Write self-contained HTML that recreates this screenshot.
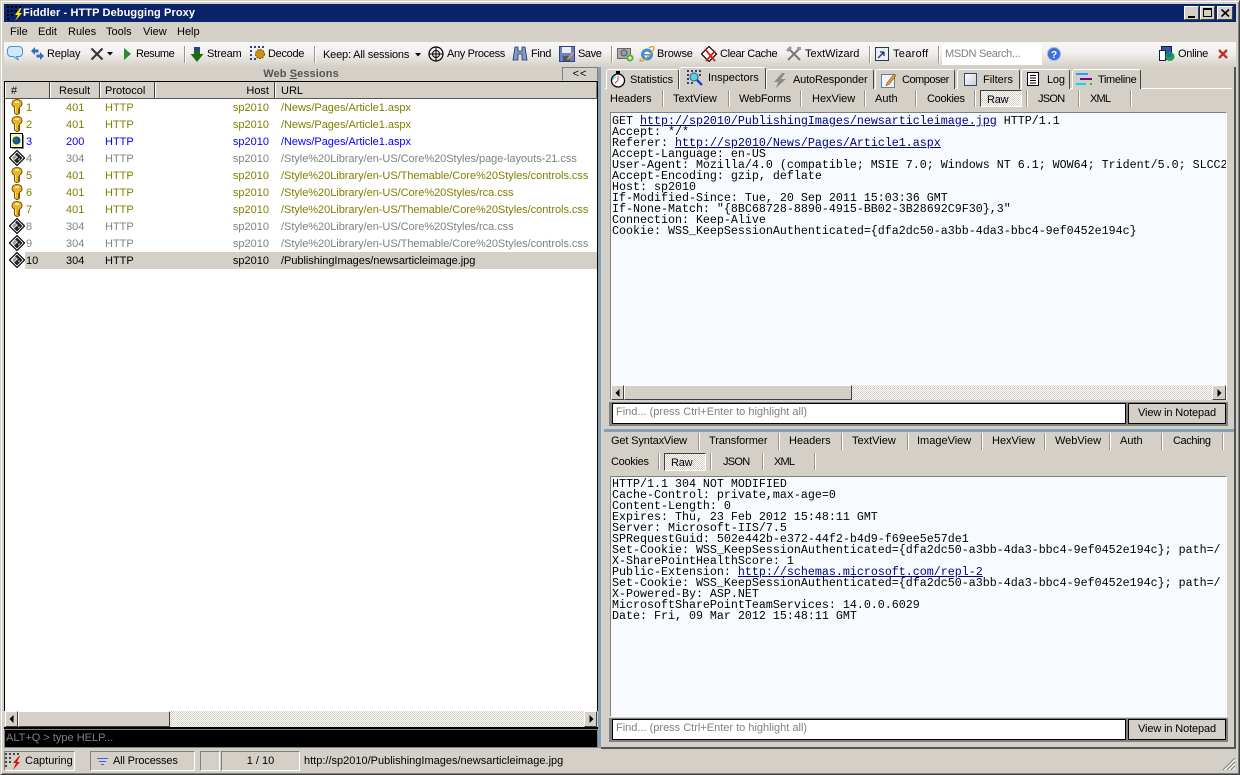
<!DOCTYPE html>
<html><head><meta charset="utf-8"><title>Fiddler - HTTP Debugging Proxy</title>
<style>
html,body{margin:0;padding:0}
body{width:1240px;height:775px;overflow:hidden;position:relative;background:#d4d0c8;font:11px/13px "Liberation Sans",sans-serif;color:#000}
.a,.t,.b,svg{position:absolute}
.t{white-space:pre;line-height:13px}
.r{text-align:right}
.ol{color:#808000}.bl{color:#0000ff}.gr{color:#808080}
.u{letter-spacing:-.035px}
.pre{position:absolute;font:11.67px/11px "Liberation Mono",monospace;white-space:pre;color:#000;margin:0}
.pre a{color:#000080;text-decoration:underline}
.btn{position:absolute;background:#d4d0c8;border:1px solid;border-color:#fff #404040 #404040 #fff;box-sizing:border-box}
.hd{position:absolute;top:82px;height:16px;background:#d4d0c8;border-left:1px solid #fff;border-right:1px solid #808080;box-sizing:border-box}
.tab{position:absolute;background:#d4d0c8;border:1px solid #fff;border-bottom:0;border-right:1px solid #444;border-radius:3px 3px 0 0;box-sizing:border-box}
.s{position:absolute;width:2px;height:17px;background:linear-gradient(90deg,#9a968e 50%,#fff 50%)}
.chk{background:repeating-conic-gradient(#fff 0 25%,#d4d0c8 0 50%) 0 0/2px 2px}
</style></head><body>
<svg width="0" height="0" style="position:absolute"><defs>
<symbol id="key" viewBox="0 0 12 16"><path d="M6 .5C2.800.5 1 2.200 1 4.500 1 6.300 2 7.500 3.500 8.200V14l2.500 1.800L8.500 14.500V13.500H7.500V12.500H8.500V11H7.500V10H8.500V8.200C10 7.500 11 6.300 11 4.500 11 2.200 9.200.5 6 .5z" fill="#e9b52c" stroke="#7a5200" stroke-width="1"/><path d="M4 2.500h4v1.500H4z" fill="#fff3b0"/><path d="M4.500 8v6" stroke="#ffe27a" stroke-width="1"/></symbol>
<symbol id="dia" viewBox="0 0 16 16"><path d="M8 .5L15.500 8 8 15.500 .5 8z" fill="#fff" stroke="#000" stroke-width="1.200"/><path d="M8 2.500L13.500 8 8 13.500 5 10.500 9 7 6 4.500z" fill="#222"/><path d="M3 8l3-3 2 1.500-3 3.500z" fill="#999"/><path d="M9 9l2-1-1 3z" fill="#ccc"/></symbol>
</defs></svg>

<!-- window frame -->
<div class="a" style="left:0;top:0;width:1240px;height:775px;box-sizing:border-box;border:1px solid;border-color:#d4d0c8 #404040 #404040 #d4d0c8;box-shadow:inset 1px 1px 0 #fff,inset -1px -1px 0 #808080"></div>
<!-- title -->
<div class="a" style="left:4px;top:4px;width:1232px;height:18px;background:#0a246a"></div>
<svg style="left:6px;top:5px" width="18" height="16"><g fill="#000"><rect x="1" y="1" width="2" height="2"/><rect x="5" y="1" width="2" height="2"/><rect x="9" y="1" width="2" height="2"/><rect x="13" y="1" width="2" height="2"/><rect x="1" y="5" width="2" height="2"/><rect x="5" y="5" width="2" height="2"/><rect x="9" y="5" width="2" height="2"/><rect x="1" y="9" width="2" height="2"/><rect x="5" y="9" width="2" height="2"/><rect x="1" y="13" width="2" height="2"/></g><path d="M14 3L9 10h3L9 16l7-8h-3l2.500-5z" fill="#ffe800"/></svg>
<div class="t" style="left:23px;top:7px;color:#fff;font-weight:bold;font-size:11px;letter-spacing:.1px">Fiddler - HTTP Debugging Proxy</div>
<div class="btn" style="left:1184px;top:6px;width:15px;height:14px"><div class="a" style="left:3px;top:9px;width:7px;height:2px;background:#000"></div></div>
<div class="btn" style="left:1200px;top:6px;width:15px;height:14px"><div class="a" style="left:2px;top:1px;width:9px;height:9px;border:1px solid #000;border-top-width:2px;box-sizing:border-box"></div></div>
<div class="btn" style="left:1217px;top:6px;width:16px;height:14px"><svg style="left:3px;top:2px" width="9" height="8"><path d="M.5.5l7.500 7M8 .5L.5 7.500" stroke="#000" stroke-width="1.600"/></svg></div>
<!-- menu -->
<div class="t" style="left:10px;top:26px">File</div>
<div class="t" style="left:38px;top:26px">Edit</div>
<div class="t" style="left:68px;top:26px">Rules</div>
<div class="t" style="left:106px;top:26px">Tools</div>
<div class="t" style="left:143px;top:26px">View</div>
<div class="t" style="left:177px;top:26px">Help</div>
<!-- toolbar -->
<div class="a" style="left:4px;top:42px;width:1232px;height:25px;background:linear-gradient(#f8f7f5,#f3f1ef 40%,#d4d0c8)"></div>
<svg style="left:7px;top:45px" width="17" height="17"><path d="M4 1.500h8c2 0 3.500 1.500 3.500 3.500v3c0 2-1.500 3.500-3.500 3.500H9.500l2 3.500-5-3.500H4C2 11.500.5 10 .5 8V5C.5 3 2 1.500 4 1.500z" fill="#cfe8fb" stroke="#4a8fd0"/></svg>
<svg style="left:30px;top:46px" width="15" height="15"><path d="M1 5l4-4v2.500h3.500v3H5V9zM14 10l-4 4v-2.500H6.500v-3H10V6z" fill="#2f6fc0"/></svg>
<div class="t" style="left:47px;top:48px;letter-spacing:-.15px">Replay</div>
<svg style="left:90px;top:47px" width="14" height="14"><path d="M1.500 1.500l11 11M12.500 1.500l-11 11" stroke="#333" stroke-width="2"/></svg>
<svg style="left:107px;top:52px" width="6" height="4"><path d="M0 0h6L3 3.500z" fill="#000"/></svg>
<svg style="left:123px;top:48px" width="9" height="12"><path d="M1 0l7 6-7 6z" fill="#2f8a2f"/></svg>
<div class="t" style="left:136px;top:48px;letter-spacing:-.45px">Resume</div>
<div class="s" style="left:184px;top:46px"></div>
<svg style="left:190px;top:46px" width="14" height="17"><path d="M4 1h6v7h3.500L7 16 .5 8H4z" fill="#1f6b15"/><rect x="4" y="1" width="6" height="3" fill="#2040b0"/></svg>
<div class="t" style="left:207px;top:48px;letter-spacing:-.15px">Stream</div>
<svg style="left:250px;top:45px" width="16" height="16"><g fill="#304090"><rect x="0" y="1" width="2" height="2"/><rect x="4" y="1" width="2" height="2"/><rect x="8" y="1" width="2" height="2"/><rect x="12" y="1" width="2" height="2"/><rect x="0" y="5" width="2" height="2"/><rect x="0" y="9" width="2" height="2"/><rect x="0" y="13" width="2" height="2"/><rect x="4" y="13" width="2" height="2"/></g><circle cx="10" cy="9" r="4.500" fill="#c89010" stroke="#705000" stroke-dasharray="2 1"/></svg>
<div class="t" style="left:268px;top:48px;letter-spacing:-.3px">Decode</div>
<div class="s" style="left:314px;top:46px"></div>
<div class="t" style="left:323px;top:49px;letter-spacing:-.17px">Keep: All sessions</div>
<svg style="left:415px;top:53px" width="6" height="4"><path d="M0 0h6L3 3.500z" fill="#000"/></svg>
<svg style="left:428px;top:46px" width="16" height="16"><circle cx="8" cy="8" r="7" fill="none" stroke="#000" stroke-width="1.200"/><path d="M8 1v14M1 8h14" fill="none" stroke="#000"/><circle cx="8" cy="8" r="3.500" fill="none" stroke="#000"/></svg>
<div class="t" style="left:447px;top:48px;letter-spacing:-.35px">Any Process</div>
<svg style="left:512px;top:46px" width="16" height="15"><path d="M3 1h3v4h4V1h3l2 13h-5V8H6v6H1z" fill="#7f9ccc" stroke="#203060" stroke-width=".8"/></svg>
<div class="t" style="left:531px;top:48px;letter-spacing:-.35px">Find</div>
<svg style="left:559px;top:46px" width="16" height="16"><rect x=".5" y=".5" width="15" height="15" fill="#6c7fc0" stroke="#304080"/><rect x="3" y="1" width="9" height="6" fill="#eee"/><rect x="4" y="10" width="7" height="5" fill="#556"/><path d="M8 13l6-7 1 1-6 7z" fill="#e0b040"/></svg>
<div class="t" style="left:578px;top:48px;letter-spacing:-.4px">Save</div>
<div class="s" style="left:611px;top:46px"></div>
<svg style="left:617px;top:46px" width="17" height="16"><rect x=".5" y="2.500" width="13" height="10" fill="#b0aca4" stroke="#666"/><circle cx="7" cy="7" r="3" fill="#8aa0c0" stroke="#555"/><circle cx="13" cy="12" r="3.500" fill="#50b030"/><path d="M13 10v4M11 12h4" stroke="#fff"/></svg>
<svg style="left:639px;top:46px" width="16" height="16"><circle cx="8" cy="8.500" r="6" fill="#3a8fdc" /><circle cx="8" cy="8.500" r="3" fill="#fff"/><path d="M5 8h6v1.500H5z" fill="#3a8fdc"/><path d="M2 13C0 15 1 16 4 14.500 9 11 14 6 15 2 15 0 13 0 10 2" fill="none" stroke="#e0a020" stroke-width="1.300"/></svg>
<div class="t" style="left:657px;top:48px;letter-spacing:-.15px">Browse</div>
<svg style="left:701px;top:46px" width="17" height="16"><path d="M8 .5L15.500 8 8 15.500 .5 8z" fill="#fff" stroke="#000" stroke-width="1.200"/><path d="M4 3l10 12M14 5L5 15" stroke="#d02020" stroke-width="1.800"/></svg>
<div class="t" style="left:720px;top:48px;letter-spacing:-.35px">Clear Cache</div>
<svg style="left:786px;top:46px" width="16" height="16"><path d="M2 14L13 3M14 14L3 3" stroke="#777" stroke-width="2"/><path d="M0 4l4-4 2 2-4 4zM11 1h4v3h-4z" fill="#999"/></svg>
<div class="t" style="left:805px;top:48px">TextWizard</div>
<div class="s" style="left:869px;top:46px"></div>
<svg style="left:875px;top:47px" width="14" height="14"><rect x=".5" y=".5" width="13" height="13" fill="#e8eef8" stroke="#334"/><path d="M3 11l6-6M9 5H5M9 5v4" stroke="#203060" stroke-width="1.300" fill="none"/></svg>
<div class="t" style="left:893px;top:48px;letter-spacing:.3px">Tearoff</div>
<div class="s" style="left:938px;top:46px"></div>
<div class="a" style="left:942px;top:44px;width:100px;height:21px;background:#fff"></div>
<div class="t gr" style="left:945px;top:48px;letter-spacing:-.3px">MSDN Search...</div>
<svg style="left:1047px;top:47px" width="14" height="14"><circle cx="7" cy="7" r="6.500" fill="#3a72d8" stroke="#9bb8e8"/><text x="7" y="11" text-anchor="middle" font-family="Liberation Sans" font-weight="bold" font-size="10" fill="#fff">?</text></svg>
<svg style="left:1159px;top:46px" width="16" height="16"><rect x="2.500" y=".5" width="10" height="13" fill="#2a5aa0" stroke="#102040"/><rect x=".5" y="4.500" width="6" height="10" fill="#fff" stroke="#102040"/><circle cx="11" cy="10.500" r="4.500" fill="#20a040"/><circle cx="10" cy="9" r="2" fill="#2060d0"/></svg>
<div class="t" style="left:1178px;top:48px;letter-spacing:-.3px">Online</div>
<svg style="left:1218px;top:49px" width="10" height="10"><path d="M1 1l8 8M9 1L1 9" stroke="#c03030" stroke-width="2.300"/></svg>

<!-- left: web sessions -->
<div class="t r" style="left:4px;top:68px;width:594px;text-align:center;font-weight:bold;color:#555;letter-spacing:.1px">Web <u>S</u>essions</div>
<div class="a" style="left:562px;top:67px;width:36px;height:14px;box-sizing:border-box;border:1px solid;border-color:#808080 #808080 #d4d0c8 #808080;text-align:center;line-height:12px;letter-spacing:1px">&lt;&lt;</div>
<div class="a" style="left:4px;top:81px;width:594px;height:630px;background:#fff;box-sizing:border-box;border:1px solid #000;border-bottom:0"></div>
<div class="a" style="left:5px;top:82px;width:592px;height:16px;background:#d4d0c8;border-bottom:1px solid #555"></div>
<div class="hd" style="left:5px;width:45px"></div>
<div class="hd" style="left:50px;width:50px"></div>
<div class="hd" style="left:100px;width:55px"></div>
<div class="hd" style="left:155px;width:120px"></div>
<div class="hd" style="left:275px;width:322px"></div>
<div class="a" style="left:49px;top:82px;width:1px;height:16px;background:#404040"></div>
<div class="a" style="left:99px;top:82px;width:1px;height:16px;background:#404040"></div>
<div class="a" style="left:154px;top:82px;width:1px;height:16px;background:#404040"></div>
<div class="a" style="left:274px;top:82px;width:1px;height:16px;background:#404040"></div>
<div class="t" style="left:11px;top:85px">#</div>
<div class="t" style="left:59px;top:85px">Result</div>
<div class="t" style="left:105px;top:85px">Protocol</div>
<div class="t r" style="left:155px;top:85px;width:114px">Host</div>
<div class="t" style="left:281px;top:85px">URL</div>

<div class="a" style="left:25px;top:252px;width:572px;height:17px;background:#d4d0c8"></div>
<svg style="left:11px;top:99px" width="12" height="16"><use href="#key"/></svg>
<svg style="left:11px;top:116px" width="12" height="16"><use href="#key"/></svg>
<svg style="left:10px;top:133px" width="15" height="16"><rect x=".5" y=".5" width="12" height="14" fill="#fff" stroke="#000"/><rect x="2" y="2" width="9" height="11" fill="#ffff80"/><circle cx="6.500" cy="7.500" r="4" fill="#1a4ca0"/><circle cx="5.500" cy="7" r="1.800" fill="#208040"/><path d="M13.500 2v13.500H2" fill="none" stroke="#888"/></svg>
<svg style="left:9px;top:150px" width="16" height="16"><use href="#dia"/></svg>
<svg style="left:11px;top:167px" width="12" height="16"><use href="#key"/></svg>
<svg style="left:11px;top:184px" width="12" height="16"><use href="#key"/></svg>
<svg style="left:11px;top:201px" width="12" height="16"><use href="#key"/></svg>
<svg style="left:9px;top:218px" width="16" height="16"><use href="#dia"/></svg>
<svg style="left:9px;top:235px" width="16" height="16"><use href="#dia"/></svg>
<svg style="left:9px;top:252px" width="16" height="16"><use href="#dia"/></svg>

<div class="t ol" style="left:26px;top:102px">1</div><div class="t ol" style="left:66px;top:102px">401</div><div class="t ol" style="left:105px;top:102px">HTTP</div><div class="t ol r" style="left:155px;top:102px;width:114px">sp2010</div><div class="t ol u" style="left:281px;top:102px">/News/Pages/Article1.aspx</div>
<div class="t ol" style="left:26px;top:119px">2</div><div class="t ol" style="left:66px;top:119px">401</div><div class="t ol" style="left:105px;top:119px">HTTP</div><div class="t ol r" style="left:155px;top:119px;width:114px">sp2010</div><div class="t ol u" style="left:281px;top:119px">/News/Pages/Article1.aspx</div>
<div class="t bl" style="left:26px;top:136px">3</div><div class="t bl" style="left:66px;top:136px">200</div><div class="t bl" style="left:105px;top:136px">HTTP</div><div class="t bl r" style="left:155px;top:136px;width:114px">sp2010</div><div class="t bl u" style="left:281px;top:136px">/News/Pages/Article1.aspx</div>
<div class="t gr" style="left:26px;top:153px">4</div><div class="t gr" style="left:66px;top:153px">304</div><div class="t gr" style="left:105px;top:153px">HTTP</div><div class="t gr r" style="left:155px;top:153px;width:114px">sp2010</div><div class="t gr u" style="left:281px;top:153px">/Style%20Library/en-US/Core%20Styles/page-layouts-21.css</div>
<div class="t ol" style="left:26px;top:170px">5</div><div class="t ol" style="left:66px;top:170px">401</div><div class="t ol" style="left:105px;top:170px">HTTP</div><div class="t ol r" style="left:155px;top:170px;width:114px">sp2010</div><div class="t ol u" style="left:281px;top:170px">/Style%20Library/en-US/Themable/Core%20Styles/controls.css</div>
<div class="t ol" style="left:26px;top:187px">6</div><div class="t ol" style="left:66px;top:187px">401</div><div class="t ol" style="left:105px;top:187px">HTTP</div><div class="t ol r" style="left:155px;top:187px;width:114px">sp2010</div><div class="t ol u" style="left:281px;top:187px">/Style%20Library/en-US/Core%20Styles/rca.css</div>
<div class="t ol" style="left:26px;top:204px">7</div><div class="t ol" style="left:66px;top:204px">401</div><div class="t ol" style="left:105px;top:204px">HTTP</div><div class="t ol r" style="left:155px;top:204px;width:114px">sp2010</div><div class="t ol u" style="left:281px;top:204px">/Style%20Library/en-US/Themable/Core%20Styles/controls.css</div>
<div class="t gr" style="left:26px;top:221px">8</div><div class="t gr" style="left:66px;top:221px">304</div><div class="t gr" style="left:105px;top:221px">HTTP</div><div class="t gr r" style="left:155px;top:221px;width:114px">sp2010</div><div class="t gr u" style="left:281px;top:221px">/Style%20Library/en-US/Core%20Styles/rca.css</div>
<div class="t gr" style="left:26px;top:238px">9</div><div class="t gr" style="left:66px;top:238px">304</div><div class="t gr" style="left:105px;top:238px">HTTP</div><div class="t gr r" style="left:155px;top:238px;width:114px">sp2010</div><div class="t gr u" style="left:281px;top:238px">/Style%20Library/en-US/Themable/Core%20Styles/controls.css</div>
<div class="t" style="left:26px;top:255px">10</div><div class="t" style="left:66px;top:255px">304</div><div class="t" style="left:105px;top:255px">HTTP</div><div class="t r" style="left:155px;top:255px;width:114px">sp2010</div><div class="t u" style="left:281px;top:255px">/PublishingImages/newsarticleimage.jpg</div>

<!-- left scrollbar -->
<div class="a chk" style="left:5px;top:711px;width:592px;height:16px"></div>
<div class="btn" style="left:5px;top:711px;width:13px;height:16px"><svg style="left:3px;top:3px" width="5" height="8"><path d="M4.500 0v8L.5 4z"/></svg></div>
<div class="btn" style="left:18px;top:711px;width:126px;height:16px;width:126px"></div>
<div class="btn" style="left:18px;top:711px;width:152px;height:16px"></div>
<div class="btn" style="left:584px;top:711px;width:13px;height:16px"><svg style="left:4px;top:3px" width="5" height="8"><path d="M.5 0v8L4.500 4z"/></svg></div>
<div class="a" style="left:4px;top:727px;width:594px;height:2px;background:#000"></div>
<!-- quick exec -->
<div class="a" style="left:4px;top:729px;width:594px;height:19px;background:#000;border:1px solid #808080;box-sizing:border-box"></div>
<div class="t" style="left:6px;top:732px;color:#808080">ALT+Q &gt; type HELP...</div>

<!-- splitter -->
<div class="a" style="left:598px;top:67px;width:3px;height:681px;background:#84a0b4"></div>
<div class="a" style="left:601px;top:67px;width:635px;height:681px;background:#d4d0c8"></div>
<div class="a" style="left:605px;top:88px;width:627px;height:1px;background:#fff"></div>
<!-- main tabs -->
<div class="tab" style="left:606px;top:69px;width:73px;height:20px"></div>
<div class="tab" style="left:679px;top:67px;width:87px;height:22px"></div>
<div class="a" style="left:680px;top:88px;width:84px;height:2px;background:#d4d0c8"></div>
<div class="tab" style="left:766px;top:69px;width:108px;height:20px"></div>
<div class="tab" style="left:875px;top:69px;width:80px;height:20px"></div>
<div class="tab" style="left:957px;top:69px;width:63px;height:20px"></div>
<div class="tab" style="left:1021px;top:69px;width:49px;height:20px"></div>
<div class="tab" style="left:1072px;top:69px;width:69px;height:20px"></div>
<svg style="left:610px;top:71px" width="16" height="17"><circle cx="8" cy="9.500" r="6.500" fill="#fff" stroke="#000" stroke-width="1.300"/><path d="M8 9.500V5M8 9.500L5 12" stroke="#d03030"/><path d="M3 9a5 5 0 0 1 3-4" stroke="#30d0e0" fill="none"/><rect x="6" y="0" width="4" height="2.500" fill="#000"/></svg>
<div class="t" style="left:630px;top:74px;letter-spacing:-.1px">Statistics</div>
<svg style="left:687px;top:70px" width="16" height="16"><g fill="#304070"><rect x="0" y="0" width="2" height="2"/><rect x="4" y="0" width="2" height="2"/><rect x="8" y="0" width="2" height="2"/><rect x="12" y="0" width="2" height="2"/><rect x="0" y="4" width="2" height="2"/><rect x="0" y="8" width="2" height="2"/><rect x="12" y="4" width="2" height="2"/><rect x="0" y="12" width="2" height="2"/><rect x="4" y="12" width="2" height="2"/></g><circle cx="7" cy="7" r="4" fill="#60d0e0" stroke="#306080"/><path d="M10 10l5 5" stroke="#2040c0" stroke-width="2.500"/></svg>
<div class="t" style="left:708px;top:72px">Inspectors</div>
<svg style="left:773px;top:73px" width="14" height="15"><path d="M9 0L1 9h4L3 15l10-9H8l4-6z" fill="#8c8c8c"/></svg>
<div class="t" style="left:793px;top:74px;letter-spacing:-.15px">AutoResponder</div>
<svg style="left:881px;top:72px" width="16" height="16"><rect x=".5" y="2.500" width="13" height="13" fill="#f4f4ff" stroke="#6080a0"/><path d="M6 11l7-9 2 1.500-7 9-3 1z" fill="#e8a030" stroke="#805020" stroke-width=".6"/></svg>
<div class="t" style="left:902px;top:74px;letter-spacing:-.5px">Composer</div>
<div class="a" style="left:964px;top:73px;width:11px;height:11px;border:1px solid #1f4f80;background:linear-gradient(135deg,#fff,#ccc)"></div>
<div class="t" style="left:983px;top:74px">Filters</div>
<svg style="left:1027px;top:72px" width="13" height="14"><rect x=".5" y=".5" width="11" height="13" fill="#fff" stroke="#000"/><path d="M3 3.500h6M3 6h6M3 8.500h6M3 11h6" stroke="#000"/></svg>
<div class="t" style="left:1047px;top:74px;letter-spacing:-.2px">Log</div>
<svg style="left:1076px;top:73px" width="17" height="13"><rect x="0" y="0" width="12" height="2" fill="#20a0ff"/><rect x="4" y="5" width="12" height="2" fill="#800080"/><rect x="0" y="10" width="10" height="2" fill="#00e0e0"/><rect x="14" y="10" width="2" height="2" fill="#00e000"/></svg>
<div class="t" style="left:1098px;top:74px;letter-spacing:-.35px">Timeline</div>

<!-- request subtabs -->
<div class="t" style="left:610px;top:93px">Headers</div>
<div class="s" style="left:662px;top:90px"></div>
<div class="t" style="left:673px;top:93px">TextView</div>
<div class="s" style="left:728px;top:90px"></div>
<div class="t" style="left:739px;top:93px;letter-spacing:-.2px">WebForms</div>
<div class="s" style="left:800px;top:90px"></div>
<div class="t" style="left:812px;top:93px">HexView</div>
<div class="s" style="left:864px;top:90px"></div>
<div class="t" style="left:875px;top:93px">Auth</div>
<div class="s" style="left:915px;top:90px"></div>
<div class="t" style="left:927px;top:93px;letter-spacing:-.3px">Cookies</div>
<div class="s" style="left:974px;top:90px"></div>
<div class="a chk" style="left:980px;top:90px;width:42px;height:17px;box-sizing:border-box;border:1px solid;border-color:#404040 #fff #fff #404040"></div>
<div class="t" style="left:987px;top:94px;letter-spacing:-.2px">Raw</div>
<div class="s" style="left:1026px;top:90px"></div>
<div class="t" style="left:1038px;top:93px;letter-spacing:-.7px">JSON</div>
<div class="s" style="left:1078px;top:90px"></div>
<div class="t" style="left:1090px;top:93px;letter-spacing:-.8px">XML</div>
<div class="s" style="left:1130px;top:90px"></div>

<!-- request body -->
<div class="a" style="left:610px;top:112px;width:617px;height:288px;box-sizing:border-box;background:#f7fbff;border:1px solid;border-color:#808080 #fff #fff #808080"></div>
<div class="a" style="left:611px;top:113px;width:615px;height:272px;overflow:hidden">
<pre class="pre" style="left:1px;top:3px">GET <a>http://sp2010/PublishingImages/newsarticleimage.jpg</a> HTTP/1.1
Accept: */*
Referer: <a>http://sp2010/News/Pages/Article1.aspx</a>
Accept-Language: en-US
User-Agent: Mozilla/4.0 (compatible; MSIE 7.0; Windows NT 6.1; WOW64; Trident/5.0; SLCC2; .NET CLR 2.0
Accept-Encoding: gzip, deflate
Host: sp2010
If-Modified-Since: Tue, 20 Sep 2011 15:03:36 GMT
If-None-Match: "{8BC68728-8890-4915-BB02-3B28692C9F30},3"
Connection: Keep-Alive
Cookie: WSS_KeepSessionAuthenticated={dfa2dc50-a3bb-4da3-bbc4-9ef0452e194c}</pre></div>
<div class="a chk" style="left:611px;top:385px;width:615px;height:15px"></div>
<div class="btn" style="left:611px;top:385px;width:13px;height:15px"><svg style="left:3px;top:3px" width="5" height="8"><path d="M4.500 0v8L.5 4z"/></svg></div>
<div class="btn" style="left:624px;top:385px;width:228px;height:15px"></div>
<div class="btn" style="left:1212px;top:385px;width:14px;height:15px"><svg style="left:4px;top:3px" width="5" height="8"><path d="M.5 0v8L4.500 4z"/></svg></div>
<div class="a" style="left:609px;top:402px;width:619px;height:24px;background:#808080"></div>
<div class="a" style="left:612px;top:403px;width:514px;height:21px;background:#fff;border:1px solid #000;box-sizing:border-box"></div>
<div class="t gr" style="left:616px;top:406px">Find... (press Ctrl+Enter to highlight all)</div>
<div class="a" style="left:1128px;top:403px;width:98px;height:21px;background:#d4d0c8;border:1px solid #000;box-sizing:border-box;text-align:center;line-height:19px;letter-spacing:-.13px">View in Notepad</div>

<!-- h splitter -->
<div class="a" style="left:604px;top:429px;width:632px;height:3px;background:#84a0b4"></div>
<!-- response tabs -->
<div class="t" style="left:611px;top:435px;letter-spacing:-.15px">Get SyntaxView</div>
<div class="s" style="left:698px;top:433px"></div>
<div class="t" style="left:709px;top:435px;letter-spacing:-.1px">Transformer</div>
<div class="s" style="left:778px;top:433px"></div>
<div class="t" style="left:789px;top:435px">Headers</div>
<div class="s" style="left:841px;top:433px"></div>
<div class="t" style="left:852px;top:435px">TextView</div>
<div class="s" style="left:907px;top:433px"></div>
<div class="t" style="left:917px;top:435px">ImageView</div>
<div class="s" style="left:981px;top:433px"></div>
<div class="t" style="left:992px;top:435px">HexView</div>
<div class="s" style="left:1044px;top:433px"></div>
<div class="t" style="left:1055px;top:435px">WebView</div>
<div class="s" style="left:1109px;top:433px"></div>
<div class="t" style="left:1120px;top:435px">Auth</div>
<div class="s" style="left:1161px;top:433px"></div>
<div class="t" style="left:1173px;top:435px;letter-spacing:-.4px">Caching</div>
<div class="s" style="left:1222px;top:433px"></div>
<div class="t" style="left:611px;top:456px;letter-spacing:-.3px">Cookies</div>
<div class="s" style="left:658px;top:453px"></div>
<div class="a chk" style="left:664px;top:453px;width:42px;height:18px;box-sizing:border-box;border:1px solid;border-color:#404040 #fff #fff #404040"></div>
<div class="t" style="left:671px;top:457px;letter-spacing:-.2px">Raw</div>
<div class="s" style="left:710px;top:453px"></div>
<div class="t" style="left:723px;top:456px;letter-spacing:-.7px">JSON</div>
<div class="s" style="left:762px;top:453px"></div>
<div class="t" style="left:774px;top:456px;letter-spacing:-.8px">XML</div>
<div class="s" style="left:814px;top:453px"></div>

<!-- response body -->
<div class="a" style="left:610px;top:476px;width:617px;height:241px;box-sizing:border-box;background:#f7fbff;border:1px solid;border-color:#808080 #fff #fff #808080;overflow:hidden">
<pre class="pre" style="left:1px;top:2px">HTTP/1.1 304 NOT MODIFIED
Cache-Control: private,max-age=0
Content-Length: 0
Expires: Thu, 23 Feb 2012 15:48:11 GMT
Server: Microsoft-IIS/7.5
SPRequestGuid: 502e442b-e372-44f2-b4d9-f69ee5e57de1
Set-Cookie: WSS_KeepSessionAuthenticated={dfa2dc50-a3bb-4da3-bbc4-9ef0452e194c}; path=/
X-SharePointHealthScore: 1
Public-Extension: <a>http://schemas.microsoft.com/repl-2</a>
Set-Cookie: WSS_KeepSessionAuthenticated={dfa2dc50-a3bb-4da3-bbc4-9ef0452e194c}; path=/
X-Powered-By: ASP.NET
MicrosoftSharePointTeamServices: 14.0.0.6029
Date: Fri, 09 Mar 2012 15:48:11 GMT</pre></div>
<div class="a" style="left:609px;top:718px;width:619px;height:24px;background:#808080"></div>
<div class="a" style="left:612px;top:719px;width:514px;height:21px;background:#fff;border:1px solid #000;box-sizing:border-box"></div>
<div class="t gr" style="left:616px;top:722px">Find... (press Ctrl+Enter to highlight all)</div>
<div class="a" style="left:1128px;top:719px;width:98px;height:21px;background:#d4d0c8;border:1px solid #000;box-sizing:border-box;text-align:center;line-height:19px;letter-spacing:-.13px">View in Notepad</div>
<div class="a" style="left:601px;top:747px;width:635px;height:2px;background:#555"></div>
<div class="a" style="left:1234px;top:67px;width:2px;height:682px;background:#555"></div>

<!-- status bar -->
<div class="a" style="left:4px;top:751px;width:71px;height:20px;box-sizing:border-box;border:1px solid;border-color:#808080 #fff #fff #808080"></div>
<svg style="left:5px;top:753px" width="16" height="17"><g fill="#444"><rect x="0" y="0" width="2" height="2"/><rect x="4" y="0" width="2" height="2"/><rect x="8" y="0" width="2" height="2"/><rect x="12" y="0" width="2" height="2"/><rect x="0" y="4" width="2" height="2"/><rect x="4" y="4" width="2" height="2"/><rect x="0" y="8" width="2" height="2"/><rect x="4" y="8" width="2" height="2"/><rect x="0" y="12" width="2" height="2"/></g><path d="M14 3L8 10h3l-3 7 7-8h-3l3-6z" fill="#e01010"/></svg>
<div class="t" style="left:25px;top:755px">Capturing</div>
<div class="a" style="left:90px;top:751px;width:105px;height:20px;box-sizing:border-box;border:1px solid;border-color:#808080 #fff #fff #808080"></div>
<svg style="left:97px;top:758px" width="12" height="9"><path d="M0 .5h11M2 3.500h7M4 6.500h3" stroke="#4060e0" stroke-width="1"/></svg>
<div class="t" style="left:113px;top:755px;letter-spacing:-.15px">All Processes</div>
<div class="a" style="left:200px;top:751px;width:20px;height:20px;box-sizing:border-box;border:1px solid;border-color:#808080 #fff #fff #808080"></div>
<div class="a" style="left:221px;top:751px;width:79px;height:20px;box-sizing:border-box;border:1px solid;border-color:#808080 #fff #fff #808080;text-align:center;line-height:18px">1 / 10</div>
<div class="t" style="left:304px;top:755px">http://sp2010/PublishingImages/newsarticleimage.jpg</div>
<svg style="left:1222px;top:757px" width="14" height="14"><path d="M13 1L1 13M13 5L5 13M13 9L9 13" stroke="#808080" stroke-width="1.200"/><path d="M13 2.500L2.500 13M13 6.500L6.500 13M13 10.500L10.500 13" stroke="#fff"/></svg>
</body></html>
